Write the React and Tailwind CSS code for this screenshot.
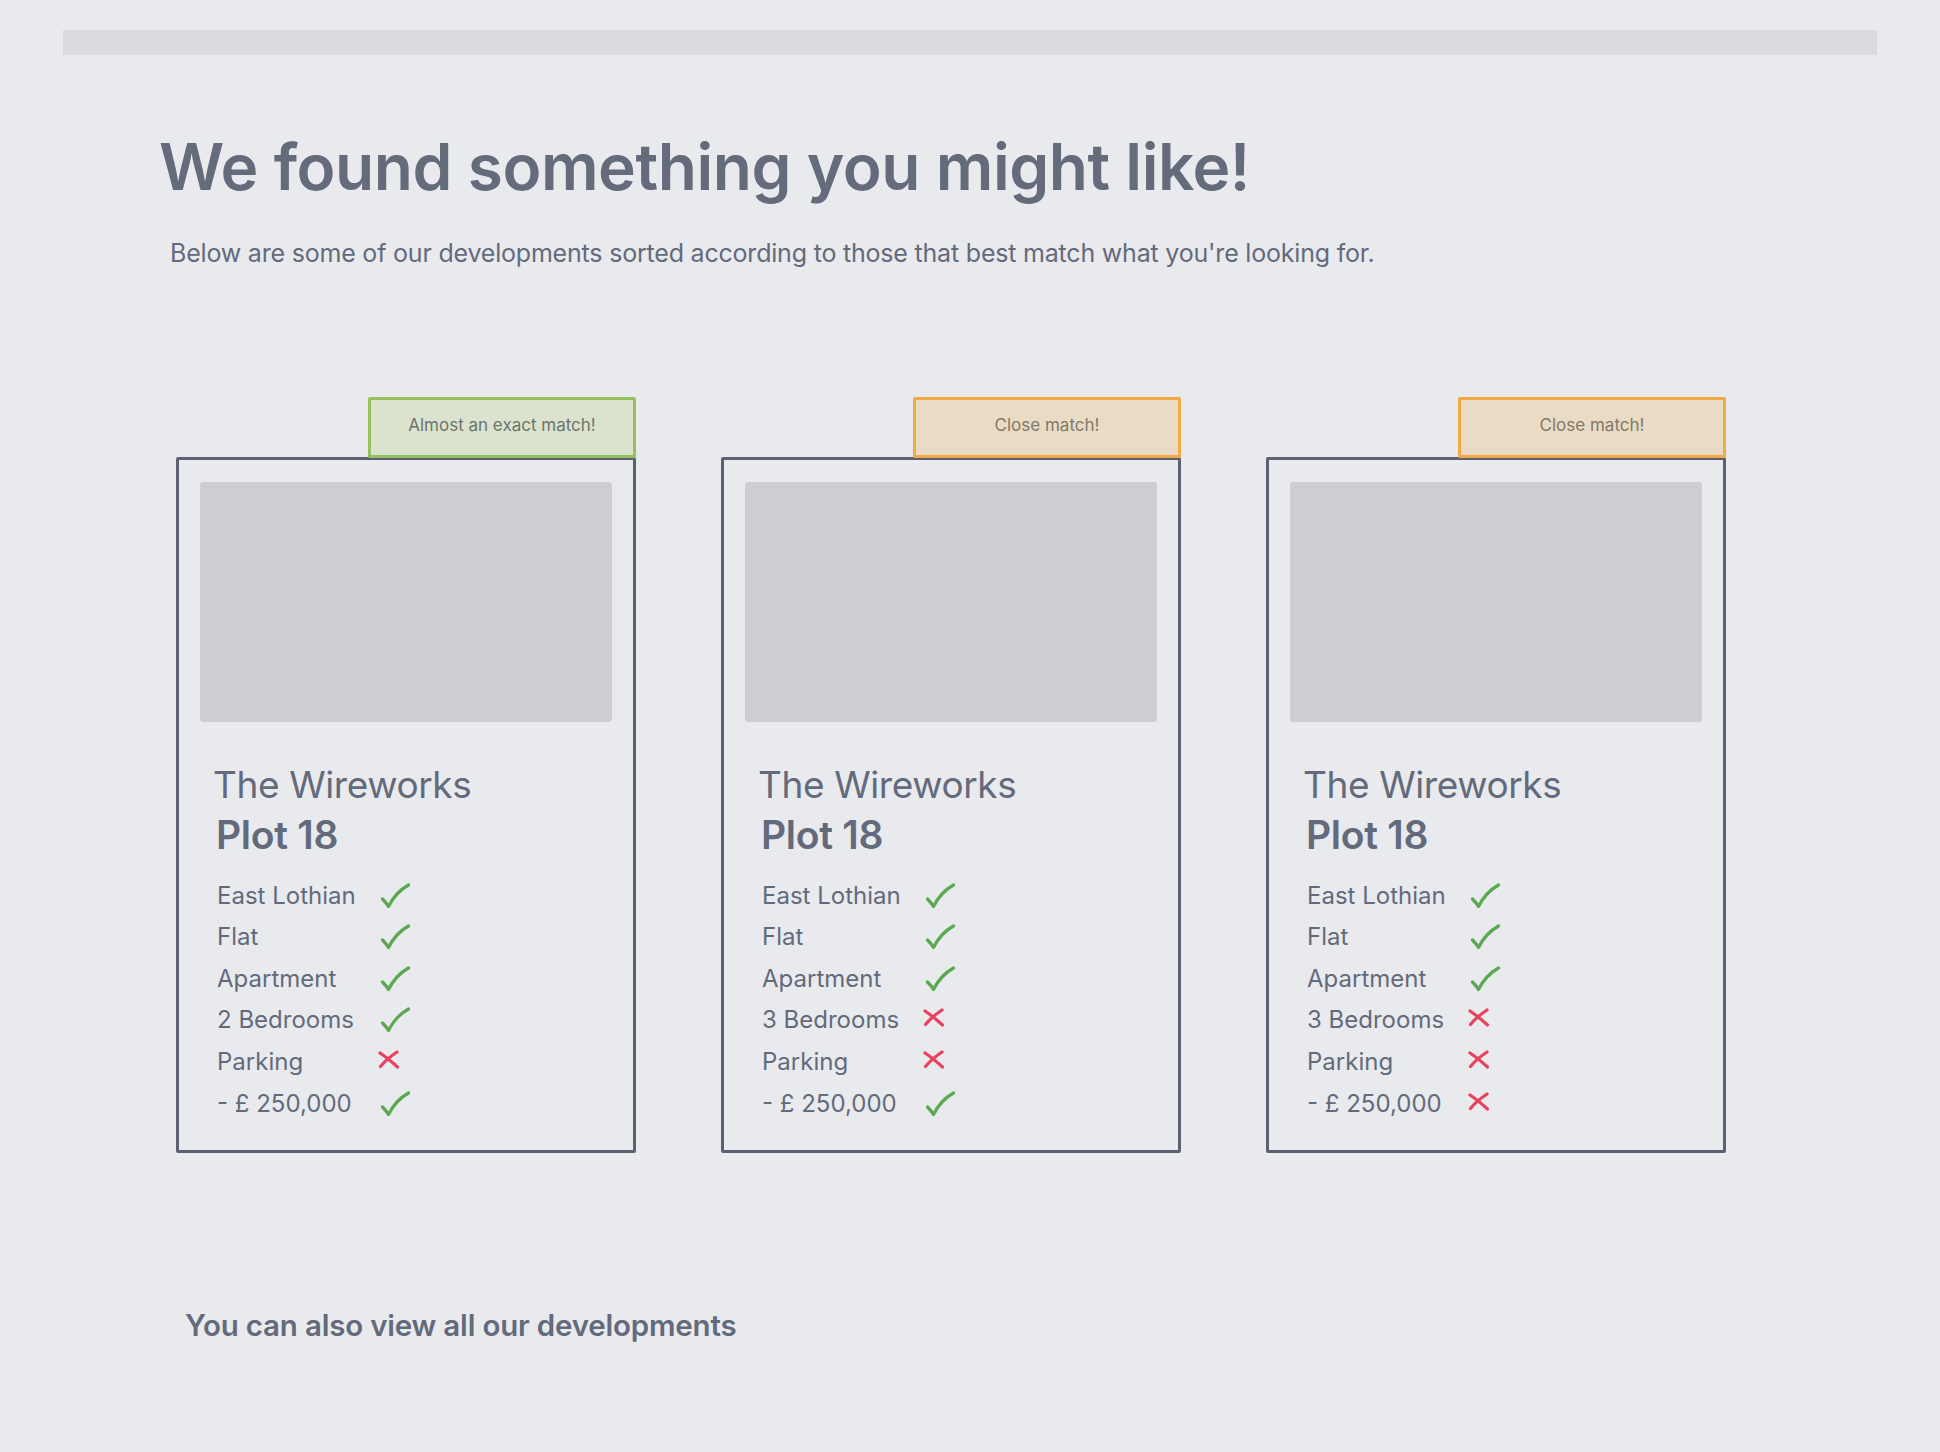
import React from "react";

const cards = [
  {
    badge: "Almost an exact match!",
    tone: "green",
    rows: [
      ["East Lothian", true],
      ["Flat", true],
      ["Apartment", true],
      ["2 Bedrooms", true],
      ["Parking", false],
      ["- £ 250,000", true],
    ],
  },
  {
    badge: "Close match!",
    tone: "orange",
    rows: [
      ["East Lothian", true],
      ["Flat", true],
      ["Apartment", true],
      ["3 Bedrooms", false],
      ["Parking", false],
      ["- £ 250,000", true],
    ],
  },
  {
    badge: "Close match!",
    tone: "orange",
    rows: [
      ["East Lothian", true],
      ["Flat", true],
      ["Apartment", true],
      ["3 Bedrooms", false],
      ["Parking", false],
      ["- £ 250,000", false],
    ],
  },
];

function Tick() {
  return (
    <svg width="31" height="26" viewBox="0 0 31 26" fill="none" className="mb-[2px]">
      <path
        d="M2.5 16 C5 18.5 7 21 8.5 23.5 C13 14.5 19.5 7 28.5 2"
        stroke="#5aa84f"
        strokeWidth="3.2"
        strokeLinecap="round"
        strokeLinejoin="round"
      />
    </svg>
  );
}

function Cross() {
  return (
    <svg width="22" height="19" viewBox="0 0 22 19" fill="none" className="-ml-[2px] mb-[8px]">
      <path d="M2 3 C8 7 14 12 19.5 17" stroke="#e8425f" strokeWidth="3.2" strokeLinecap="round" />
      <path d="M19 2 C13 6 7 11 2.5 16.5" stroke="#e8425f" strokeWidth="3.2" strokeLinecap="round" />
    </svg>
  );
}

function Card({ card }) {
  const badge =
    card.tone === "green"
      ? "border-[#95c05c] bg-[#dbe3cf] text-[#6b746c]"
      : "border-[#f2aa47] bg-[#eadcc4] text-[#80786d]";
  return (
    <div className="flex w-[460px] flex-col">
      <div
        className={`relative z-10 flex h-[61px] w-[268px] items-center justify-center self-end rounded-[2px] border-[3px] pb-[4px] text-[17px] ${badge}`}
      >
        {card.badge}
      </div>
      <div className="-mt-[1px] rounded-[2px] border-[3px] border-[#5b6173] px-[21px] pt-[22px] pb-[31px]">
        <div className="h-[240px] rounded-[3px] bg-[#cdced2]" />
        <div className="mt-[41px] pl-[13px] text-[37px] leading-[44px] tracking-[-0.4px]">The Wireworks</div>
        <div className="mt-[8px] pl-[16px] text-[39px] leading-[40px] font-semibold tracking-[-0.3px]">Plot 18</div>
        <div className="mt-[14px] pl-[17px]">
          {card.rows.map(([label, ok], i) => (
            <div key={i} className="flex h-[41.6px] items-end">
              <span className="w-[163px] text-[24px] leading-[30px]">{label}</span>
              {ok ? <Tick /> : <Cross />}
            </div>
          ))}
        </div>
      </div>
    </div>
  );
}

export default function App() {
  return (
    <div
      className="min-h-screen bg-[#e9eaee] pt-[30px] pb-[60px] text-[#636a7b]"
      style={{ fontFamily: "Inter, 'Liberation Sans', sans-serif" }}
    >
      <div className="mx-[63px] h-[25px] bg-[#dadbdf]" />
      <h1 className="mt-[72px] pl-[159px] text-[64px] leading-[80px] font-semibold tracking-[-0.45px] text-[#646b7b]">
        We found something you might like!
      </h1>
      <p className="mt-[31px] pl-[170px] text-[25px] leading-[30px] tracking-[-0.2px]">
        Below are some of our developments sorted according to those that best match what you're looking for.
      </p>
      <div className="mt-[129px] flex gap-[85px] pl-[176px]">
        {cards.map((c, i) => (
          <Card key={i} card={c} />
        ))}
      </div>
      <h2 className="mt-[154px] pl-[185px] text-[29.5px] leading-[36px] font-semibold tracking-[-0.2px]">
        You can also view all our developments
      </h2>
    </div>
  );
}
